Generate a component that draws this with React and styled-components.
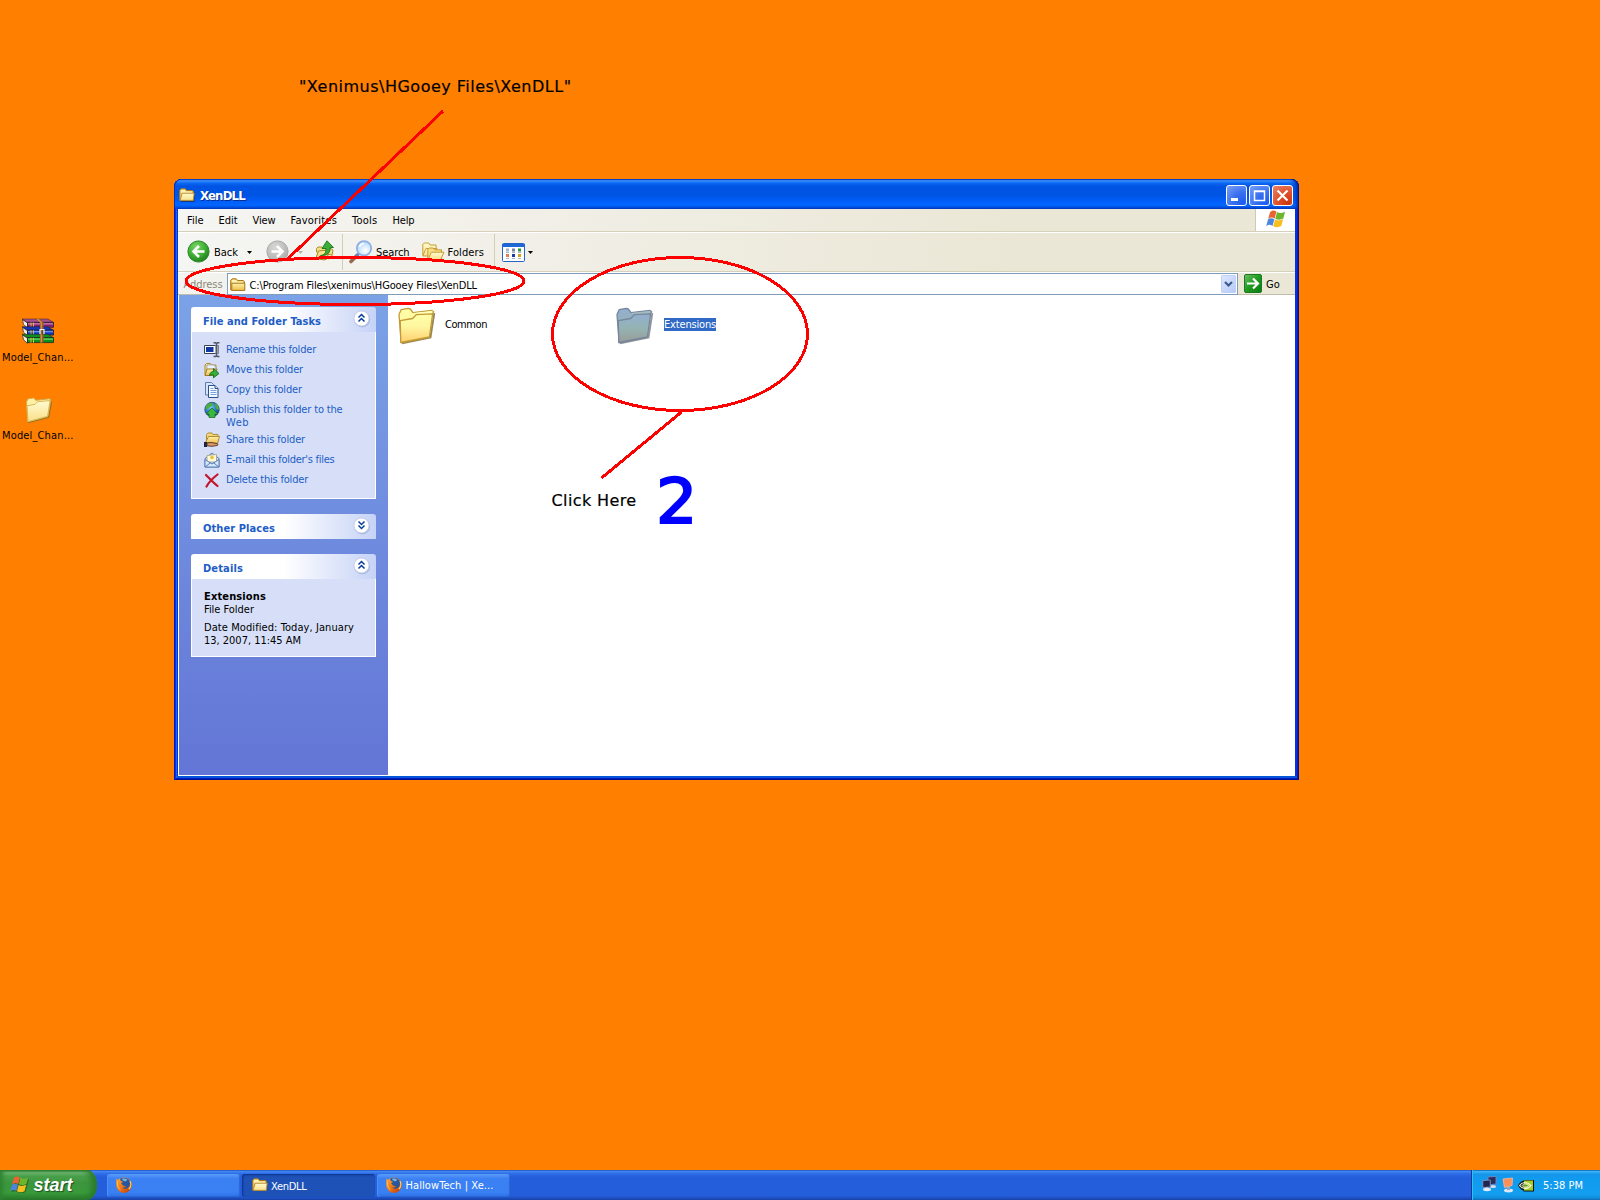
import React from "react";
import styled, { createGlobalStyle } from "styled-components";

const UI = '"DejaVu Sans Condensed", "DejaVu Sans", "Noto Sans", sans-serif';
const WIDE = '"DejaVu Sans", sans-serif';
const SLANT = '"Liberation Sans", sans-serif';

const Global = createGlobalStyle`
  html, body { margin: 0; padding: 0; width: 1600px; height: 1200px; overflow: hidden; }
  svg { display: block; flex: none; overflow: visible; }
`;

/* Text whose tracking is adjusted so that it fills the given width */
const pen = document.createElement("canvas").getContext("2d");
const tracking = (text, width, size, weight, family, style) => {
  pen.font = `${style} ${weight} ${size}px ${family}`;
  return (width - pen.measureText(text).width) / text.length;
};
const Run = styled.span`
  display: block;
  flex: none;
  white-space: pre;
  font: ${(p) => `${p.$slope} ${p.$weight} ${p.$size}px/${p.$line}px ${p.$family}`};
  color: ${(p) => p.$color};
  width: ${(p) => p.$width}px;
  margin-left: ${(p) => p.$ml}px;
  margin-top: ${(p) => p.$mt}px;
  text-shadow: ${(p) => p.$shadow || "none"};
`;
function Text({ children, w, size = 11, weight = 400, family = UI, slope = "normal", color = "#000", line = 13, ml = 0, mt = 0, shadow }) {
  const spacing = tracking(children, w, size, weight, family, slope);
  return (
    <Run $width={w} $size={size} $weight={weight} $family={family} $slope={slope} $color={color}
      $line={line} $ml={ml} $mt={mt} $shadow={shadow} style={{ letterSpacing: spacing + "px" }}>
      {children}
    </Run>
  );
}

/* ---------- layout ---------- */
const Desktop = styled.div`
  position: relative;
  display: flex;
  flex-direction: column;
  justify-content: space-between;
  width: 1600px;
  height: 1200px;
  background: #ff8000;
  overflow: hidden;
`;
const Shortcuts = styled.div`
  display: flex;
  flex-direction: column;
  width: 76px;
  padding-top: 318px;
`;
const Shortcut = styled.div`
  height: 78px;
  display: flex;
  flex-direction: column;
`;
const ShortcutArt = styled.div`
  height: 32px;
  padding: 1px 0 0 22px;
`;
const Window = styled.section`
  position: absolute;
  left: 174px;
  top: 179px;
  width: 1125px;
  height: 601px;
  box-sizing: border-box;
  padding: 0 4px 4px;
  display: flex;
  flex-direction: column;
  border-radius: 8px 8px 0 0;
  background: #0831d9;
  box-shadow: inset 1px 0 #0019cf, inset -1px 0 #00138c, inset 0 -1px #00138c, inset -2px 0 #001dc2, inset 2px 0 #0831d9,
    inset 0 -2px #001dc2, inset 3px 0 #166aee, inset 0 -4px #0855dd;
  overflow: hidden;
`;
const TitleBar = styled.header`
  height: 30px;
  margin: 0 -4px;
  padding: 2px 6px 0 5px;
  box-sizing: border-box;
  display: flex;
  align-items: center;
  flex: none;
  border-radius: 8px 8px 0 0;
  background: linear-gradient(#0a4bd0 0, #0a4bd0 3%, #3a93ff 5%, #2a83fa 9%, #0a66f0 14%, #0054e3 24%, #0055e5 55%, #005cf8 72%, #0366ff 86%, #0059ec 93%, #003ec4 100%);
  box-shadow: inset 1px 0 #0030c0, inset -1px 0 #00138c, inset -3px 0 3px #0030b0;
`;
const Caption = styled.div`
  display: flex;
  gap: 2px;
  margin-left: auto;
`;
const CaptionButton = styled.div`
  width: 21px;
  height: 21px;
  box-sizing: border-box;
  border: 1px solid #fff;
  border-radius: 3px;
  background: ${(p) =>
    p.$close
      ? "radial-gradient(circle at 80% 90%, #c8380f 0, #de5029 45%, #ec866a 100%)"
      : "radial-gradient(circle at 85% 90%, #1c5cf0 0, #3a70ee 45%, #7ca2f8 100%)"};
`;
const MenuRow = styled.nav`
  display: flex;
  flex: none;
  height: 22px;
  border-bottom: 1px solid #d6d0bb;
  box-shadow: 0 1px #fff;
  margin-bottom: 1px;
  background: linear-gradient(90deg, #f5f5f3, #ebe7d6 75%);
  gap: 15px;
  padding-left: 9px;
`;
const Flag = styled.div`
  width: 40px;
  height: 22px;
  margin-left: auto;
  border-left: 1px solid #d0cab4;
  box-sizing: border-box;
  background: #fff;
  padding: 0 0 0 10px;
`;
const ToolRow = styled.div`
  display: flex;
  flex: none;
  box-sizing: border-box;
  height: 39px;
  border-bottom: 1px solid #d6d0bb;
  box-shadow: 0 1px #fff;
  margin-bottom: 1px;
  background: linear-gradient(90deg, #f5f5f3, #ebe7d6 75%);
`;
const Place = styled.div`
  flex: none;
  width: ${(p) => p.$w}px;
  margin-left: ${(p) => p.$ml || 0}px;
  margin-top: ${(p) => p.$mt || 0}px;
`;
const Divider = styled.div`
  width: 1px;
  height: 36px;
  margin-top: 1px;
  margin-left: ${(p) => p.$ml}px;
  background: #d3ceb8;
`;
const AddressRow = styled.div`
  display: flex;
  flex: none;
  height: 22px;
  box-sizing: border-box;
  background: linear-gradient(90deg, #f3f3ef, #ebe7d6 75%);
  border-bottom: 1px solid #c2bda8;
`;
const Combo = styled.div`
  width: 1011px;
  height: 22px;
  box-sizing: border-box;
  display: flex;
  margin-left: 4.5px;
  border: 1px solid #7f9db9;
  background: #fff;
`;
const DropButton = styled.div`
  width: 15px;
  height: 18px;
  margin: 1px 1px 0 auto;
  border-radius: 2px;
  background: linear-gradient(135deg, #e0e9fe, #b4c8f6);
  box-shadow: inset 0 0 0 1px #c0d0f8;
`;
const Content = styled.div`
  display: flex;
  flex: 1;
  background: #fff;
  min-height: 0;
`;
const Sidebar = styled.aside`
  width: 209px;
  height: 480px;
  margin-left: 1px;
  box-sizing: border-box;
  padding: 12px;
  display: flex;
  flex-direction: column;
  gap: 15px;
  background: linear-gradient(#7ba2e7, #6375d6);
`;
const Panel = styled.div`
  width: 185px;
`;
const PanelHead = styled.div`
  height: 25px;
  display: flex;
  align-items: center;
  border-radius: 3px 3px 0 0;
  background: linear-gradient(90deg, #fff 50%, #c6d3f7);
  padding-left: 12px;
  box-sizing: border-box;
`;
const ChevronSlot = styled.div`
  margin: 0 5px 2px auto;
`;
const PanelBody = styled.div`
  height: ${(p) => p.$h}px;
  box-sizing: border-box;
  border: 1px solid #fff;
  border-top: 0;
  background: #d6dff7;
  padding: ${(p) => p.$pad};
`;
const Task = styled.div`
  display: flex;
  height: ${(p) => p.$rows * 10 + 10}px;
  gap: 6px;
`;
const TaskLabel = styled.div`
  padding-top: 1px;
`;
const Lines = styled.div`
  margin-bottom: 5px;
`;
const Files = styled.main`
  display: flex;
  padding: 12px 0 0 10px;
`;
const FileTile = styled.div`
  display: flex;
  width: 218px;
  height: 40px;
  align-items: flex-start;
`;
const FileName = styled.div`
  margin: 11px 0 0 ${(p) => (p.$on ? 11 : 10)}px;
  height: 13px;
  background: ${(p) => (p.$on ? "#316ac5" : "transparent")};
`;
const Note = styled.div`
  position: absolute;
  left: ${(p) => p.$x}px;
  top: ${(p) => p.$y}px;
  -webkit-text-stroke: ${(p) => p.$stroke || 0}px ${(p) => p.$ink || "#000"};
  transform: scaleX(${(p) => p.$stretch || 1});
`;
const Marks = styled.svg`
  position: absolute;
  left: 0;
  top: 0;
`;
const Taskbar = styled.footer`
  display: flex;
  width: 1600px;
  height: 30px;
  background: linear-gradient(#1f4fc0 0, #3f87f0 5%, #2f6ce6 12%, #245edb 25%, #245edb 85%, #1d4ec0 94%, #1941a5 100%);
`;
const Start = styled.div`
  width: 97px;
  height: 30px;
  box-sizing: border-box;
  padding: 5px 0 0 10px;
  display: flex;
  border-radius: 0 10px 10px 0 / 0 15px 15px 0;
  background: linear-gradient(#2f7a33 0, #7fc081 8%, #4aa04c 20%, #3b953d 45%, #3a9b3b 75%, #2f8531 92%, #256b27 100%);
  box-shadow: inset -5px 0 6px #2a7a2c, inset 3px 0 4px #2f8531;
`;
const TaskList = styled.div`
  display: flex;
  gap: 2px;
  padding: 4px 0 0 10px;
`;
const TaskButton = styled.div`
  width: 133px;
  height: 23px;
  box-sizing: border-box;
  display: flex;
  border-radius: 3px;
  padding: 3px 0 0 ${(p) => p.$pad}px;
  background: ${(p) => (p.$down ? "#1e52b7" : "linear-gradient(#5a9bf8 0, #3c81f3 20%, #3980f3 80%, #2f72e4 100%)")};
  box-shadow: ${(p) => (p.$down ? "inset 1px 1px 2px #0d328a" : "inset 1px 0 #4d90f6, inset -1px -1px 1px #2a66d4")};
`;
const Tray = styled.div`
  display: flex;
  width: 129px;
  height: 30px;
  box-sizing: border-box;
  margin-left: auto;
  border-left: 1px solid #0b3a9c;
  box-shadow: inset 1px 0 #2fc0f6;
  background: linear-gradient(#0c59b9 0, #3ab2f5 5%, #1595eb 14%, #109bee 30%, #139ef0 80%, #118edb 93%, #0d69b8 100%);
`;

/* ---------- drawings ---------- */
const Defs = () => (
  <svg width="0" height="0" style={{ position: "absolute" }}>
    <defs>
      <linearGradient id="fold" x1="0" y1="0" x2="0" y2="1">
        <stop offset="0" stopColor="#ffffa8" /><stop offset=".45" stopColor="#fff6a0" /><stop offset="1" stopColor="#ffcf6e" />
      </linearGradient>
      <linearGradient id="foldOn" x1="0" y1="0" x2="0" y2="1">
        <stop offset="0" stopColor="#93afd2" /><stop offset=".5" stopColor="#94b3b2" /><stop offset="1" stopColor="#9a9c98" />
      </linearGradient>
      <linearGradient id="cream" x1="0" y1="0" x2="0" y2="1">
        <stop offset="0" stopColor="#fffbd0" /><stop offset="1" stopColor="#f9e08b" />
      </linearGradient>
      <linearGradient id="gold" x1="0" y1="0" x2="0" y2="1">
        <stop offset="0" stopColor="#fff0a8" /><stop offset="1" stopColor="#f0bf4c" />
      </linearGradient>
      <radialGradient id="green" cx=".4" cy=".3" r=".75">
        <stop offset="0" stopColor="#7fd868" /><stop offset=".55" stopColor="#3fae35" /><stop offset="1" stopColor="#1c7a1e" />
      </radialGradient>
      <radialGradient id="grey" cx=".4" cy=".3" r=".75">
        <stop offset="0" stopColor="#d9d9d6" /><stop offset="1" stopColor="#acacaa" />
      </radialGradient>
      <radialGradient id="lens" cx=".6" cy=".65" r=".7">
        <stop offset="0" stopColor="#fff" /><stop offset="1" stopColor="#a9d4fb" />
      </radialGradient>
      <linearGradient id="go" x1="0" y1="0" x2="1" y2="1">
        <stop offset="0" stopColor="#6cc067" /><stop offset=".5" stopColor="#1f9a20" /><stop offset="1" stopColor="#0a7a12" />
      </linearGradient>
      <radialGradient id="globe" cx=".4" cy=".35" r=".7">
        <stop offset="0" stopColor="#7cc8f4" /><stop offset=".6" stopColor="#2b6fc4" /><stop offset="1" stopColor="#123c86" />
      </radialGradient>
      <linearGradient id="fox" x1="0" y1="0" x2="1" y2="1">
        <stop offset="0" stopColor="#ffb03a" /><stop offset=".5" stopColor="#ee7414" /><stop offset="1" stopColor="#b8380a" />
      </linearGradient>
    </defs>
  </svg>
);

const SmallFolder = ({ dark, deep }) => (
  <svg width="16" height="16" viewBox="0 0 16 16">
    {dark && <path d="M2 14.5h13V5" fill="none" stroke="#123a80" strokeWidth="1.2" />}
    <path d="M.7 13V3.2L2 1.8h4.2l1.4 1.7h5.6l1.2 1V13z" fill="#f2cf62" stroke="#a87820" />
    <path d="M2 3h4l1 1.5h6V6H2z" fill="#fff3b8" />
    {deep
      ? <path d="M1.8 13.4V6.2H14.8V13.4z" fill="url(#gold)" stroke="#a87820" />
      : <path d="M1 13.4 3.2 6.2H15.2L14.2 13.4z" fill="url(#cream)" stroke="#b5852a" strokeWidth=".9" />}
  </svg>
);
const BigFolder = ({ on }) => {
  const edge = on ? "#76869a" : "#c39a34";
  const fill = on ? "url(#foldOn)" : "url(#fold)";
  return (
    <svg width="37" height="38" viewBox="0 0 37 38">
      <path d="M4 36.3 32.5 30.5 36.3 6" fill="none" stroke={on ? "#7d8288" : "#857338"} strokeWidth="1.9" opacity=".85" />
      <path d="M1 7.5 3.2 2.6 10 1.4 12.3 2 15 5.6 34 3.5 35.6 4.8 33.6 8 31 30 3.2 35.5z" fill={fill} stroke={edge} strokeWidth="1.3" strokeLinejoin="round" />
      <path d="M15 5.9 34.5 3.8 34 7 18 8.4z" fill={on ? "#a3bbc1" : "#ffffb9"} />
      <path d="M2.2 13.6 14.6 11.5 18.2 7.7 34 6.8 34.5 8 31.4 30 2.8 35.5z" fill={fill} stroke={edge} strokeWidth="1.3" strokeLinejoin="round" />
    </svg>
  );
};
const DeskFolder = () => (
  <svg width="32" height="30" viewBox="0 0 32 30">
    <path d="M6 25.5 26.5 20 29.4 4.5" fill="none" stroke="#9a7427" strokeWidth="1.6" />
    <path d="M4.3 5 6 1.8 11.5 1 14 3.3 28 1.7 28.6 4 25.8 19.5 5.8 24.8z" fill="#fdf0a4" stroke="#d3aa48" />
    <path d="M5 8.8 13 7.4 15.5 4.7 28 3.6 25.6 19.3 6 24.6z" fill="url(#cream)" stroke="#dcb857" />
  </svg>
);
const Archive = () => (
  <svg width="32" height="26" viewBox="0 0 32 26">
    {[["#84246f", "#c477ae", 1.5], ["#1338b8", "#6a8cf0", 9.3], ["#0f8f22", "#58d858", 16.8]].map(([c, l, y]) => (
      <g key={y}>
        <path d={`M.5 ${y - 1} 5.5 ${y + 2.5}V${y + 7.5}L1.5 ${y + 4}z`} fill="#f1eddf" stroke="#26263a" strokeWidth=".7" />
        <path d={`M0 ${y - 1.5}H26L31.5 ${y + 2}H5.5z`} fill={y < 2 ? "#a8508f" : c} stroke="#221a2c" strokeWidth=".5" />
        <path d={`M5.5 ${y + 1.8}H31.5V${y + 6.8}H5.5z`} fill={c} stroke="#151a28" strokeWidth=".7" />
        <path d={`M6 ${y + 3.3}H31`} stroke={l} strokeWidth="1.4" />
        <path d={`M9 ${y + 2}v5M11.5 ${y + 2}v5`} stroke="#e6c03c" strokeWidth=".9" />
      </g>
    ))}
    <path d="M14 0h4l3.5 3v20.500h-3.500V3.500z" fill="#9c5c20" />
    <path d="M15.5 0 19.3 3.5V23.5" stroke="#d89a52" strokeWidth="1.1" fill="none" />
    <path d="M18 15V10.500h4V15" stroke="#f0eee6" strokeWidth="1.2" fill="none" />
    <path d="M20 11.500v4" stroke="#333" strokeWidth="1" />
  </svg>
);
const WinFlag = ({ size = 20, dark }) => (
  <svg width={size} height={size} viewBox="0 0 20 20">
    {dark && <path d="M5 4.6C8 2.5 10 5 12 5s5 .5 8-1L16.5 18C13 19.5 10 19 7.5 17.8 5 16.5 3 17 1.4 18z" fill="#1c5a20" opacity=".7" />}
    <path d="M4 3.2C6.2 1.2 8 1.2 10.4 2.6L8.7 9.4C6.3 8.2 4.4 8.2 2.2 9.9z" fill="#ea6330" />
    <path d="M11 3C13.4 4.4 16 4.3 19.1 2.8L17.3 9.6C14.5 11 11.7 11 9.3 9.8z" fill="#6cb52d" />
    <path d="M2 10.5C4 8.8 6 9 8.4 10.2L6.6 16.8C4.4 15.5 2.4 15.5.2 17.2z" fill="#4a86dc" />
    <path d="M9.1 10.5C11.5 11.8 14 11.8 17.1 10.3L15.3 17.1C12.5 18.5 9.8 18.5 7.3 17.2z" fill="#f7be1e" />
  </svg>
);
const Round = ({ on }) => (
  <svg width="23" height="23" viewBox="0 0 23 23">
    <circle cx="11.5" cy="11.5" r="10.6" fill={on ? "url(#green)" : "url(#grey)"} stroke={on ? "#2c8a2b" : "#a9a9a6"} />
    <path d={on ? "M17.5 11.5H7M12 6 6.5 11.5 12 17" : "M5.5 11.5H16M11 6l5.5 5.5L11 17"} fill="none" stroke="#fff" strokeWidth="2.6" />
  </svg>
);
const Caret = ({ c = "#000" }) => (
  <svg width="5" height="3" viewBox="0 0 5 3"><path d="M0 0h5L2.5 3z" fill={c} /></svg>
);
const UpFolder = () => (
  <svg width="20" height="21" viewBox="0 0 20 21">
    <path d="M1.5 12V8.5L3 7h4l1 1.5h8l2 1.5-1 5z" fill="#f3df86" stroke="#b08e2e" />
    <path d="M.8 18.5 3.5 11 13.5 10 12.5 18.5 9.5 20z" fill="url(#gold)" stroke="#a98526" />
    <path d="M12.5 20 18.5 12.5 17.5 17z" fill="#d8b04a" />
    <path d="M5.5 15.5c4.5-.5 5.5-3 5.5-7H7L12 .8 18.5 7.5h-3.2c0 5-3 8.5-9.8 8z" fill="#3aae35" stroke="#1d7420" strokeWidth=".9" />
  </svg>
);
const SearchIcon = () => (
  <svg width="24" height="24" viewBox="0 0 24 24">
    <path d="M8 15.5 2 21.5" stroke="#9c6a4c" strokeWidth="3.6" strokeLinecap="round" />
    <path d="M10 13.5 6 17.5" stroke="#6c83b0" strokeWidth="3" />
    <circle cx="15" cy="8.3" r="7.2" fill="url(#lens)" stroke="#8fb0e2" strokeWidth="1.8" />
    <path d="M10.5 7c.6-2.4 2.5-3.5 4.5-3.5" stroke="#fff" strokeWidth="1.6" fill="none" />
  </svg>
);
const FoldersIcon = () => (
  <svg width="23" height="20" viewBox="0 0 23 20">
    <path d="M.8 12V1.4L2.2 0h4.6l1.2 2h6l.6 11z" fill="url(#cream)" stroke="#c79c37" />
    <path d="M.8 13 4 5.5h11L13 13z" fill="url(#cream)" stroke="#c79c37" />
    <path d="M5.8 16V6.5L7.2 5h4l1.3 1.8h7V16z" fill="#f6df86" stroke="#c79c37" />
    <path d="M6 16.5 9.4 9.2H22L18.7 16.5z" fill="url(#cream)" stroke="#c79c37" />
  </svg>
);
const ViewsIcon = () => (
  <svg width="23" height="19" viewBox="0 0 23 19">
    <rect x=".5" y=".5" width="22" height="18" rx="1" fill="#fff" stroke="#2264c8" />
    <path d="M0 1h23v3H0z" fill="#1f66d6" />
    {["#a8b4c8", "#7484a8", "#28983c", "#e87850", "#1c3ca0", "#d8a020"].map((c, i) => (
      <rect key={i} x={4 + (i % 3) * 6} y={i < 3 ? 5.5 : 11} width="3" height="3" fill={c} />
    ))}
    <path d="M4 9.5h3M10 9.5h3M16 9.5h3M4 15.5h3M10 15.5h3M16 15.5h3" stroke="#a9b3cc" />
  </svg>
);
const GoIcon = () => (
  <svg width="18" height="19" viewBox="0 0 18 19">
    <rect x=".5" y=".5" width="17" height="18" rx="1.5" fill="url(#go)" stroke="#1a7c22" />
    <path d="M3 9.5h10M9 4.5l5 5-5 5" fill="none" stroke="#fff" strokeWidth="2.2" />
  </svg>
);
const Chevrons = ({ down }) => (
  <svg width="19" height="19" viewBox="0 0 19 19">
    <circle cx="10.2" cy="10.4" r="8" fill="#9aa9d4" opacity=".7" />
    <circle cx="9.5" cy="9.5" r="7.6" fill="#fff" stroke="#c3cce6" />
    <path d={down ? "M6.5 5.5l3 3 3-3M6.5 9.5l3 3 3-3" : "M6.5 8.5l3-3 3 3M6.5 12.5l3-3 3 3"} fill="none" stroke="#0a3c9c" strokeWidth="1.5" />
  </svg>
);

const TaskArt = {
  rename: (
    <>
      <path d="M.5 3.5h11v8H.5z" fill="#fff" stroke="#3a4058" /><path d="M2 5h7.5v5H2z" fill="#1238a4" />
      <path d="M11 3.5h3.5v8H11" fill="#b5bdcc" stroke="#6f7a8e" strokeWidth=".9" />
      <path d="M9.5 .8h2l1 .8 1-.8H15.500M12.5 1.5v12M9.5 14.5h2l1-1 1 1H15.5" stroke="#525a68" strokeWidth="1.5" fill="none" />
    </>
  ),
  move: (
    <>
      <path d="M1 13V3l1.5-1.5h4L7.500 3H12v10z" fill="#f3d878" stroke="#b08d38" />
      <path d="M3 3h7l2 3v3H3z" fill="#eef4ff" stroke="#8fa4c8" strokeWidth=".8" />
      <path d="M1 13.5 3 7h10l-1.5 6.5z" fill="url(#gold)" stroke="#a07c28" />
      <path d="M5.5 13.5c.5-3 2-4 4-4V6.5l5.5 5-5.500 4.300V13c-1.500 0-3-.3-4 .5z" fill="#36b03a" stroke="#156a1c" strokeWidth=".9" />
    </>
  ),
  copy: (
    <>
      <path d="M1.5.5h6l2 2v10.5h-8z" fill="#d6e4fa" stroke="#5b7cb4" />
      <path d="M4.5 3.5h6.5l3 3v9H4.5z" fill="#f4f9ff" stroke="#2d4f8c" />
      <path d="M11 3.5v3h3" fill="#c2d6f4" stroke="#2d4f8c" />
      <path d="M6.5 6.5h3M6.5 8.5h6M6.5 10.5h6M6.5 12.5h6" stroke="#7ca4dc" />
    </>
  ),
  publish: (
    <>
      <circle cx="8" cy="7.5" r="7.2" fill="url(#globe)" stroke="#224878" strokeWidth=".8" />
      <path d="M2 4c2-3 5-3.5 7-3 0 2-1 3-3 4-1 2-3 1.5-4.5 3zM11 1.5c2.500.5 4 3 4 6-2 1-4-1-4-5z" fill="#4cae3c" />
      <path d="M8 6 14 12H11V15.5H5V12H2z" fill="#38b83c" stroke="#14651c" strokeWidth=".7" />
    </>
  ),
  share: (
    <>
      <path d="M2.5 10V2.5L4 1h4l1 1.5h5V10z" fill="#f3d878" stroke="#b08d38" />
      <path d="M1.5 10.5 4.5 4.5h11l-2 7z" fill="url(#gold)" stroke="#b08d38" />
      <path d="M0 10h3v5H0z" fill="#1b2340" /><path d="M3 11 7 10.5l6 1c1.5.7 1 1.8 0 2l-5 .8-5-.5z" fill="#d99a68" stroke="#54301c" strokeWidth=".9" />
    </>
  ),
  mail: (
    <>
      <path d="M1 6.5 8 1l7 5.5v8.5H1z" fill="#bcd3f5" stroke="#5d7fb8" />
      <path d="M3 3.5 12.5 2.5V10H3z" fill="#fff9da" stroke="#a69e7a" strokeWidth=".8" /><circle cx="8" cy="5.5" r="1.8" fill="#e9c13c" />
      <path d="M1 7.5 8 12l7-4.5V15H1z" fill="#d6e6fd" stroke="#5d7fb8" /><path d="M1 15 6.5 10.8M15 15 9.5 10.8" stroke="#5d7fb8" />
    </>
  ),
  remove: <path d="M2 3C5 6 9 10.5 13.5 14M13.5 2.5C9 6 5 10 2.5 14.5" stroke="#c4152c" strokeWidth="2.2" fill="none" strokeLinecap="round" />,
};
const TaskIcon = ({ kind }) => <svg width="16" height="16" viewBox="0 0 16 16">{TaskArt[kind]}</svg>;

const Firefox = () => (
  <svg width="16" height="16" viewBox="0 0 16 16">
    <path d="M.6 1.5 2 3C3 1.5 5 .4 8 .4c4.5 0 7.7 3.3 7.7 7.6S12.3 15.8 8 15.8.3 12.5.3 8C.3 5.5 0 3.5.6 1.5z" fill="url(#fox)" />
    <path d="M4 1.8C6.5 0 11 .2 13 3c1.7 2.3 1.2 6-1 7.8-2 1.5-4.5 1-5.5-.3 2 .3 3-.5 3.3-1.3L7 8.5 5 6 7.3 5 4.5 3.5z" fill="#27589f" />
    <path d="M6 1.8c2-.8 4.5-.3 5.5 1.2L9 4.5 6.5 3z" fill="#78b4e4" />
    <path d="M14 4c1.5 3 1 6-1.2 8" stroke="#ffd65c" strokeWidth="1.1" fill="none" />
    <path d="M1.5 4.5C1 8 2 11 4.5 12.8" stroke="#ffc24a" strokeWidth=".9" fill="none" />
  </svg>
);
const Monitors = () => (
  <svg width="15" height="16" viewBox="0 0 15 16">
    <path d="M6 1l8-.6V8L6 9z" fill="#262c5c" stroke="#7886b8" strokeWidth=".9" /><ellipse cx="11" cy="10.5" rx="3" ry="1.5" fill="#cfd8ee" />
    <path d="M.8 4.5 8.3 4v7L.8 11.5z" fill="#20264e" stroke="#8794c0" strokeWidth=".9" /><path d="M3.5 11h3v2h-3z" fill="#9fabc9" /><ellipse cx="5" cy="13.5" rx="4" ry="1.7" fill="#e6ebf6" />
  </svg>
);
const Screen = () => (
  <svg width="12" height="16" viewBox="0 0 12 16">
    <ellipse cx="6.5" cy="13.5" rx="4.5" ry="1.9" fill="#dfe6f6" /><path d="M5 10h3v3H5z" fill="#96a2c8" />
    <path d="M1 2 10.5 1 10 8.5 2.5 10.5z" fill="#fb8f5a" stroke="#f0b496" strokeWidth=".9" />
  </svg>
);
const Eye = () => (
  <svg width="16" height="12" viewBox="0 0 16 12">
    <path d="M5.5 0H16v11.5H5.5z" fill="#111" />
    <path d="M5.5.5h9.5v10H5.5z" fill="#a4cc2c" />
    <path d="M0 5.5C2 2 4 1 6 .8V10.8C4 10.5 2 9 0 5.5z" fill="#111" />
    <path d="M1.5 5.5C4 2 8.5 1 13 5.5 9.5 10 4.5 9.5 1.5 5.5z" fill="none" stroke="#f2f8d8" strokeWidth="1.2" />
    <path d="M4 5.5c1.5-2 4.5-2.2 6.5 0-2 2.2-5 2-6.500 0z" fill="#6c9a20" stroke="#f2f8d8" strokeWidth=".9" />
  </svg>
);

/* ---------- content ---------- */
const menu = [["File", 16.5], ["Edit", 19], ["View", 23], ["Favorites", 46.5], ["Tools", 25.5], ["Help", 22]];
const tasks = [
  ["rename", [["Rename this folder", 90]]],
  ["move", [["Move this folder", 77]]],
  ["copy", [["Copy this folder", 76]]],
  ["publish", [["Publish this folder to the", 116.5], ["Web", 23]]],
  ["share", [["Share this folder", 79]]],
  ["mail", [["E-mail this folder's files", 108.5]]],
  ["remove", [["Delete this folder", 82]]],
];
const BLUE = "#215dc6";

const Head = ({ title, w, down }) => (
  <PanelHead>
    <Text w={w} weight={700} color={BLUE} mt={4}>{title}</Text>
    <ChevronSlot><Chevrons down={down} /></ChevronSlot>
  </PanelHead>
);

export default function App() {
  return (
    <Desktop>
      <Global />
      <Defs />
      <Shortcuts>
        <Shortcut>
          <ShortcutArt><Archive /></ShortcutArt>
          <Text w={71.5} ml={2}>Model_Chan...</Text>
        </Shortcut>
        <Shortcut>
          <ShortcutArt><DeskFolder /></ShortcutArt>
          <Text w={71.5} ml={2}>Model_Chan...</Text>
        </Shortcut>
      </Shortcuts>

      <Window>
        <TitleBar>
          <SmallFolder dark />
          <Text w={45} size={13} weight={700} color="#fff" line={16} mt={1} ml={5} shadow="1px 1px #0a2c8a">XenDLL</Text>
          <Caption>
            <CaptionButton><svg width="19" height="19"><path d="M4 12h7v3H4z" fill="#fff" /></svg></CaptionButton>
            <CaptionButton><svg width="19" height="19"><path d="M4.5 5h10v9.5h-10zM4 5.5h11" fill="none" stroke="#fff" strokeWidth="1.5" /></svg></CaptionButton>
            <CaptionButton $close><svg width="19" height="19"><path d="M4.5 4.5l10 10M14.5 4.5l-10 10" stroke="#fff" strokeWidth="2.2" /></svg></CaptionButton>
          </Caption>
        </TitleBar>

        <MenuRow>
          {menu.map(([t, w]) => <Text key={t} w={w} mt={5}>{t}</Text>)}
          <Flag><WinFlag /></Flag>
        </MenuRow>

        <ToolRow>
          <Place $w={23} $ml={9} $mt={7}><Round on /></Place>
          <Text w={24} ml={4} mt={13}>Back</Text>
          <Place $w={5} $ml={9} $mt={18}><Caret /></Place>
          <Place $w={23} $ml={14} $mt={7}><Round /></Place>
          <Place $w={5} $ml={9} $mt={18}><Caret c="#b8b5a8" /></Place>
          <Place $w={20} $ml={12} $mt={7}><UpFolder /></Place>
          <Divider $ml={7} />
          <Place $w={24} $ml={6} $mt={7}><SearchIcon /></Place>
          <Text w={33.5} ml={3} mt={13}>Search</Text>
          <Place $w={23} $ml={12} $mt={10}><FoldersIcon /></Place>
          <Text w={36.5} ml={3} mt={13}>Folders</Text>
          <Divider $ml={9.5} />
          <Place $w={23} $ml={7} $mt={10}><ViewsIcon /></Place>
          <Place $w={5} $ml={3} $mt={18}><Caret /></Place>
        </ToolRow>

        <AddressRow>
          <Text w={39} ml={5.5} mt={5} color="#8a8877">Address</Text>
          <Combo>
            <Place $w={16} $ml={2} $mt={3}><SmallFolder deep /></Place>
            <Text w={227.5} ml={3.5} mt={5}>{"C:\\Program Files\\xenimus\\HGooey Files\\XenDLL"}</Text>
            <DropButton>
              <svg width="15" height="18"><path d="M4 7l3.5 3.5L11 7" fill="none" stroke="#3f5a8c" strokeWidth="2.2" /></svg>
            </DropButton>
          </Combo>
          <Place $w={18} $ml={6} $mt={1}><GoIcon /></Place>
          <Text w={14} ml={4} mt={5}>Go</Text>
        </AddressRow>

        <Content>
          <Sidebar>
            <Panel>
              <Head title="File and Folder Tasks" w={118} />
              <PanelBody $h={167} $pad="10px 0 0 12px">
                {tasks.map(([kind, lines]) => (
                  <Task key={kind} $rows={lines.length}>
                    <TaskIcon kind={kind} />
                    <TaskLabel>{lines.map(([t, w]) => <Text key={t} w={w} color={BLUE}>{t}</Text>)}</TaskLabel>
                  </Task>
                ))}
              </PanelBody>
            </Panel>
            <Panel><Head title="Other Places" w={72} down /></Panel>
            <Panel>
              <Head title="Details" w={40} />
              <PanelBody $h={78} $pad="11px 0 0 12px">
                <Lines>
                  <Text w={62} weight={700}>Extensions</Text>
                  <Text w={50}>File Folder</Text>
                </Lines>
                <Text w={150}>Date Modified: Today, January</Text>
                <Text w={97}>13, 2007, 11:45 AM</Text>
              </PanelBody>
            </Panel>
          </Sidebar>
          <Files>
            <FileTile>
              <BigFolder />
              <FileName><Text w={42}>Common</Text></FileName>
            </FileTile>
            <FileTile>
              <BigFolder on />
              <FileName $on><Text w={52} color="#fff">Extensions</Text></FileName>
            </FileTile>
          </Files>
        </Content>
      </Window>

      <Note $x={299} $y={77} $stroke={0.2}><Text w={272.5} size={16} family={WIDE} line={20}>{'"Xenimus\\HGooey Files\\XenDLL"'}</Text></Note>
      <Note $x={551.5} $y={491} $stroke={0.2}><Text w={85} size={16} family={WIDE} line={20}>Click Here</Text></Note>
      <Note $x={656.5} $y={462} $stroke={2} $ink="#0000ff" $stretch={1.05}><Text w={41} size={62} family={WIDE} line={80} color="#0000ff">2</Text></Note>
      <Marks width="1600" height="1200" fill="none" stroke="#ff0000" strokeWidth="3" shapeRendering="crispEdges">
        <ellipse cx="355" cy="281" rx="169" ry="23.5" />
        <ellipse cx="680" cy="334" rx="127.5" ry="76.5" />
        <path d="M443 111 288 258.5M681.5 412 601.500 478" />
      </Marks>

      <Taskbar>
        <Start>
          <WinFlag size={19} dark />
          <Text w={39} size={18} weight={700} slope="italic" family={SLANT} color="#fff" line={20} ml={4.5} shadow="1px 1px 1px #1c4f1e">start</Text>
        </Start>
        <TaskList>
          <TaskButton $pad={9}><Firefox /></TaskButton>
          <TaskButton $pad={10} $down>
            <SmallFolder />
            <Text w={35.5} ml={3} mt={3} color="#fff">XenDLL</Text>
          </TaskButton>
          <TaskButton $pad={9}>
            <Firefox />
            <Text w={88} ml={3.5} mt={2} color="#fff">HallowTech | Xe...</Text>
          </TaskButton>
        </TaskList>
        <Tray>
          <Place $w={15} $ml={10} $mt={6}><Monitors /></Place>
          <Place $w={12} $ml={5} $mt={7}><Screen /></Place>
          <Place $w={16} $ml={4} $mt={10}><Eye /></Place>
          <Text w={40} ml={9} mt={9} color="#fff">5:38 PM</Text>
        </Tray>
      </Taskbar>
    </Desktop>
  );
}
